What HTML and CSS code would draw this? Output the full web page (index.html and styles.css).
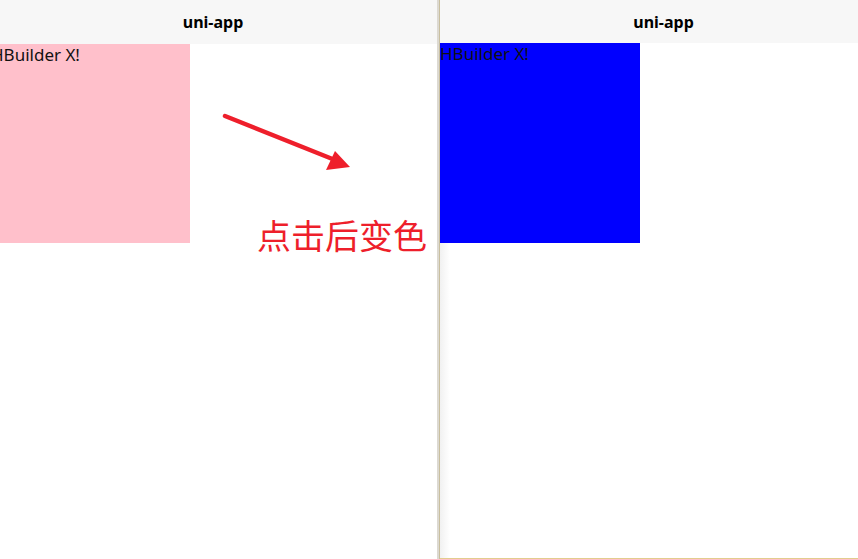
FILE: index.html
```html
<!DOCTYPE html>
<html>
<head>
<meta charset="utf-8">
<link rel="stylesheet" href="styles.css">
</head>
<body>
<div class="screen">
  <div class="pane pane-left">
    <div class="navbar navbar-left"><span class="title">uni-app</span></div>
    <div class="content">
      <div class="box box-pink"><span class="label label-cut">HBuilder X!</span></div>
      <svg class="arrow" width="140" height="60" viewBox="0 0 140 60">
        <line x1="5" y1="4" x2="115" y2="48" stroke="#ee1f2b" stroke-width="4.5" stroke-linecap="round"/>
        <polygon points="130,55 106,58 115,39" fill="#ee1f2b"/>
      </svg>
      <div class="note">点击后变色</div>
    </div>
  </div>
  <div class="divider"></div>
  <div class="pane pane-right">
    <div class="navbar navbar-right"><span class="title">uni-app</span></div>
    <div class="content">
      <div class="box box-blue"><span class="label">HBuilder X!</span></div>
    </div>
  </div>
</div>
</body>
</html>
```
FILE: styles.css
```css
html, body {
  margin: 0;
  padding: 0;
  background: #ffffff;
}
.screen {
  display: flex;
  width: 858px;
  height: 559px;
  overflow: hidden;
}
.pane {
  display: flex;
  flex-direction: column;
  height: 559px;
  background: #ffffff;
}
.pane-left {
  width: 437px;
  position: relative;
}
.pane-right {
  flex: 1;
  position: relative;
  box-sizing: border-box;
  border-bottom: 1px solid #e2cc8e;
  background: linear-gradient(to right, #f1f1f1 0, #ffffff 10px);
}
.navbar {
  display: flex;
  align-items: center;
  justify-content: center;
  background: #f7f7f7;
  flex: none;
}
.navbar-left {
  height: 44px;
  padding-right: 11px;
}
.navbar-right {
  height: 43px;
  padding-left: 29px;
}
.title {
  font-family: "Noto Sans", "Open Sans", sans-serif;
  font-weight: 700;
  font-size: 16px;
  color: #000000;
  line-height: 20px;
}
.content {
  position: relative;
  flex: 1;
}
.box {
  height: 200px;
  overflow: hidden;
}
.box-pink {
  width: 190px;
  background: #ffc0cb;
  height: 199px;
}
.box-blue {
  width: 200px;
  background: #0000ff;
}
.label {
  display: block;
  font-family: "Noto Sans", "Liberation Sans", sans-serif;
  font-size: 17px;
  line-height: 22px;
  color: #111111;
  white-space: nowrap;
}
.label-cut {
  margin-left: -9px;
}
.arrow {
  position: absolute;
  left: 220px;
  top: 68px;
}
.note {
  position: absolute;
  left: 257px;
  top: 169px;
  font-family: "Noto Sans CJK SC", sans-serif;
  font-size: 34px;
  line-height: 44px;
  color: #ee1f2b;
}
.divider {
  width: 3px;
  flex: none;
  background: linear-gradient(to right, #dcd9d2 0, #dcd9d2 2px, #c9bf9f 2px, #c9bf9f 3px);
}
```
